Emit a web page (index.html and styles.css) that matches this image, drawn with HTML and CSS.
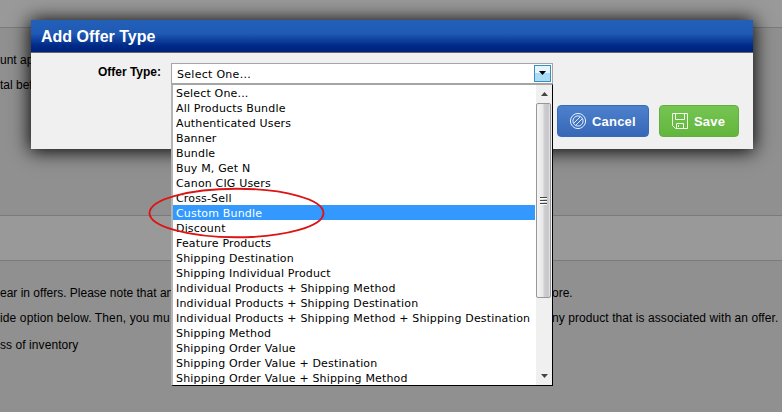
FILE: index.html
```html
<!DOCTYPE html>
<html lang="en">
<head>
<meta charset="utf-8">
<title>Add Offer Type</title>
<link rel="stylesheet" href="styles.css">
</head>
<body>
<main class="page">
  <div class="band band-top"></div>
  <section class="panel panel-first">
    <p class="row">unt ap</p>
    <p class="row row-total">tal bef</p>
  </section>
  <div class="band"></div>
  <section class="panel panel-last">
    <p class="row split"><span>ear in offers. Please note that an</span><span>ore.</span></p>
    <p class="row split"><span class="wide">ide option below. Then, you mu</span><span class="loose">ny product that is associated with an offer.</span></p>
    <p class="row row-inv loose">ss of inventory</p>
  </section>
</main>

<div class="modal">
  <header class="modal-head"><h1>Add Offer Type</h1></header>
  <div class="modal-body">
    <div class="field">
      <span class="label">Offer Type:</span>
      <div class="select"><span class="value">Select One...</span><span class="drop"><svg width="9" height="5" viewBox="0 0 9 5"><path d="M1 0h7L4.500 4z" fill="#000"/></svg></span></div>
    </div>
    <div class="actions">
      <button class="btn cancel"><svg width="18" height="18" viewBox="0 0 18 18" fill="none" stroke="#e6effc"><circle cx="9" cy="9" r="7.600"/><circle cx="9" cy="9" r="5.100"/><path d="M4.800 11.200l6.400-6.400M6.800 13.200l6.400-6.400"/></svg><span>Cancel</span></button>
      <button class="btn save"><svg width="18" height="18" viewBox="0 0 18 18" fill="none" stroke="#effce8"><path d="M1.500 1.500h15v15h-12l-3-3zM4.500 1.500v6h9v-6M5.500 16.500v-5h7v5M7.500 13v2"/></svg><span>Save</span></button>
    </div>
  </div>
</div>

<div class="menu">
  <ul class="options">
    <li>Select One...</li>
    <li>All Products Bundle</li>
    <li>Authenticated Users</li>
    <li>Banner</li>
    <li>Bundle</li>
    <li>Buy M, Get N</li>
    <li>Canon CIG Users</li>
    <li>Cross-Sell</li>
    <li class="active">Custom Bundle</li>
    <li>Discount</li>
    <li>Feature Products</li>
    <li>Shipping Destination</li>
    <li>Shipping Individual Product</li>
    <li>Individual Products + Shipping Method</li>
    <li>Individual Products + Shipping Destination</li>
    <li>Individual Products + Shipping Method + Shipping Destination</li>
    <li>Shipping Method</li>
    <li>Shipping Order Value</li>
    <li>Shipping Order Value + Destination</li>
    <li>Shipping Order Value + Shipping Method</li>
  </ul>
  <div class="scroll">
    <span class="arrow"><svg width="7" height="4" viewBox="0 0 7 4"><path d="M0 4h7L3.500 0z" fill="#444"/></svg></span>
    <span class="thumb"><i></i><i></i><i></i></span>
    <span class="arrow arrow-down"><svg width="7" height="4" viewBox="0 0 7 4"><path d="M0 0h7L3.500 4z" fill="#444"/></svg></span>
  </div>
</div>

<svg class="callout" width="180" height="56" viewBox="0 0 180 56"><ellipse cx="89.500" cy="28" rx="87" ry="24.300" fill="none" stroke="#dc1414" stroke-width="1.900"/></svg>
</body>
</html>
```
FILE: styles.css
```css
* { box-sizing: border-box; }
body { margin: 0; width: 782px; height: 412px; overflow: hidden; position: relative; background: #909090; font-family: "Liberation Sans", Arial, sans-serif; color: #000; }
h1, p, ul { margin: 0; padding: 0; }
svg { display: block; flex: none; }

.page { display: flex; flex-direction: column; height: 412px; font-size: 12px; }
.band { height: 46px; background: #999; border-top: 1px solid #7a7a7a; border-bottom: 1px solid #7a7a7a; }
.band-top { height: 28px; border-top: 0; }
.panel-first { height: 187px; padding-top: 24px; }
.panel-last { padding-top: 24px; }
.row { height: 25px; line-height: 16px; white-space: nowrap; }
.row-inv { padding-top: 2px; }
.split { display: grid; grid-template-columns: 552px 1fr; }
.wide { letter-spacing: .13px; }
.loose { letter-spacing: .07px; }

.modal { position: absolute; left: 31px; top: 20px; width: 722px; height: 129px; background: #f0f0f0; box-shadow: 0 1px 18px 1px #000; }
.modal-head { height: 33px; padding-left: 10px; background: linear-gradient(#2360b8 0%, #1f5ab4 42%, #002a88 80%, #00207a 100%); border-bottom: 1px solid #666; }
.modal-head h1 { font-size: 16px; line-height: 33px; color: #fff; }
.modal-body { padding: 10px 14px 0 0; }
.field { display: flex; }
.label { width: 140px; padding-right: 10px; text-align: right; font-size: 12px; line-height: 18px; font-weight: bold; white-space: nowrap; }
.select { width: 382px; height: 21px; display: flex; justify-content: space-between; background: #fff; border: 1px solid #a5a5a5; font: 11px/20px "DejaVu Sans", Verdana, sans-serif; letter-spacing: .28px; }
.value { padding: 1px 0 0 5px; }
.drop { width: 17px; height: 17px; margin: 1px; display: flex; align-items: center; justify-content: center; border: 1px solid #3c8fb8; background: linear-gradient(#e5f5fd 50%, #a9dcf6 50%); }
.actions { display: flex; justify-content: flex-end; gap: 10px; margin-top: 21px; }
.btn { height: 32px; display: flex; align-items: center; padding: 0 0 0 11px; gap: 5px; border-radius: 4px; color: #fff; font: bold 13px "Liberation Sans", Arial, sans-serif; letter-spacing: .2px; }
.cancel { width: 92px; background: linear-gradient(#4c80cc, #3768b8); border: 1px solid #386ab8; }
.save { width: 80px; background: linear-gradient(#76c553, #62b63c); border: 1px solid #65ad43; }

.menu { position: absolute; left: 171px; top: 84px; width: 382px; height: 302px; display: flex; background: #fff; border: 1px solid #000; border-top-color: #a5a5a5; border-left: 2px solid #b4b4b4; }
.options { flex: 1; list-style: none; font: 11px/15px "DejaVu Sans", Verdana, sans-serif; letter-spacing: .165px; white-space: nowrap; }
.options li { height: 15px; padding: 1px 0 0 3px; margin-right: 1px; }
.options .active { background: #3399ff; color: #fff; }
.scroll { width: 16px; background: #f0f0f0; display: flex; flex-direction: column; }
.arrow { height: 18px; display: flex; align-items: center; justify-content: center; }
.arrow-down { margin-top: auto; }
.thumb { height: 195px; margin-right: 1px; display: flex; flex-direction: column; align-items: center; justify-content: center; gap: 2px; border: 1px solid #979797; border-radius: 2px; background: linear-gradient(90deg, #f5f5f5 0%, #e8e8ea 45%, #cfcfd3 55%, #c4c4c9 85%, #e8e8e8 100%); }
.thumb i { width: 7px; height: 1px; background: #444; box-shadow: 0 1px #fff; }
.callout { position: absolute; left: 147px; top: 185px; }
```
